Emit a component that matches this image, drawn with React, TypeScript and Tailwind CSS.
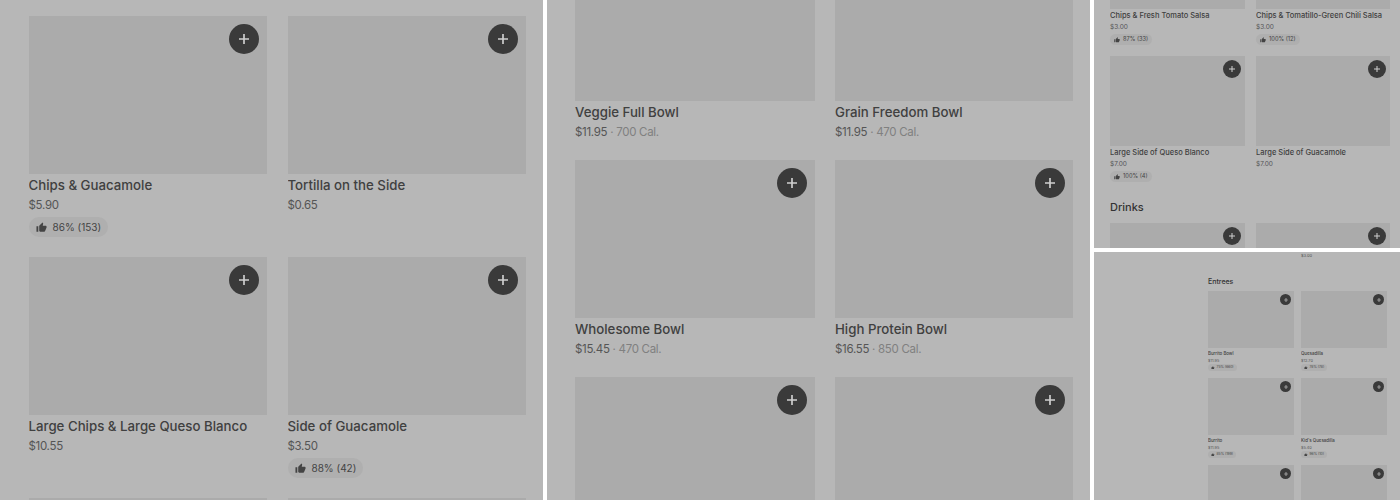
import { MdThumbUp } from 'react-icons/md';

type Item = { name: string; price?: string; cal?: string; rating?: string };

// class sets for each zoom level of the menu
const large = {
  image: 'h-[158px]',
  button: 'top-2 right-[8px] w-[30px] h-[30px]',
  plus: 'w-[10px] h-[10px]',
  name: 'mt-[2px] text-[13.25px] leading-[18px] font-medium',
  price: 'mt-[3px] text-[11.5px] leading-[16px] tracking-[-0.3px]',
  badge: 'mt-[4px] h-[20px] px-[7px] gap-[6px] text-[10px] rounded-[10px]',
  thumb: 'w-[11px] h-[11px]',
};
const medium = {
  image: 'h-[90px]',
  button: 'top-[4px] right-[4px] w-[18px] h-[18px]',
  plus: 'w-[6px] h-[6px]',
  name: 'mt-[2px] text-[7.5px] leading-[10px] font-medium',
  price: 'mt-[2px] text-[6.5px] leading-[9px]',
  badge: 'mt-[2px] h-[11px] px-[4px] gap-[3px] text-[5.7px] rounded-[6px]',
  thumb: 'w-[6px] h-[6px]',
};
const small = {
  image: 'h-[57px]',
  button: 'top-[3px] right-[3px] w-[11px] h-[11px]',
  plus: 'w-[4px] h-[4px]',
  name: 'mt-[2px] text-[4.4px] leading-[7px] font-medium',
  price: 'mt-[1px] text-[3.8px] leading-[6px]',
  badge: 'h-[7px] px-[3px] gap-[2px] text-[3.4px] rounded-[4px]',
  thumb: 'w-[3.5px] h-[3.5px]',
};

function Card({ item, size }: { item: Item; size: typeof large }) {
  return (
    <div>
      <div className={`relative bg-[#ababab] ${size.image}`}>
        <div className={`absolute flex items-center justify-center rounded-full bg-[#3a3a3a] ${size.button}`}>
          <svg viewBox="0 0 12 12" className={size.plus}>
            <path d="M5 0h2v5h5v2H7v5H5V7H0V5h5z" fill="#d0d0d0" />
          </svg>
        </div>
      </div>
      {item.name && <div className={`truncate text-[#404040] ${size.name}`}>{item.name}</div>}
      {item.price && (
        <div className={`text-[#555555] ${size.price}`}>
          {item.price}
          {item.cal && <span className="text-[#808080]"> · {item.cal}</span>}
        </div>
      )}
      {item.rating && (
        <div className={`flex w-fit items-center bg-[#afafaf] text-[#444444] ${size.badge}`}>
          <MdThumbUp className={size.thumb} />
          <span>{item.rating}</span>
        </div>
      )}
    </div>
  );
}

export default function App() {
  return (
    <div className="w-[1400px] h-[500px] overflow-hidden bg-white flex gap-[4px] font-['Inter','Liberation_Sans',sans-serif]">
      {/* first screen */}
      <div className="w-[543px] h-[500px] overflow-hidden bg-[#b7b7b7] pt-4 pl-[28.5px]">
        <div className="grid grid-cols-[238.5px_238.5px] gap-x-[20.5px] auto-rows-[241px]">
          <Card size={large} item={{ name: 'Chips & Guacamole', price: '$5.90', rating: '86% (153)' }} />
          <Card size={large} item={{ name: 'Tortilla on the Side', price: '$0.65' }} />
          <Card size={large} item={{ name: 'Large Chips & Large Queso Blanco', price: '$10.55' }} />
          <Card size={large} item={{ name: 'Side of Guacamole', price: '$3.50', rating: '88% (42)' }} />
          <Card size={large} item={{ name: '' }} />
          <Card size={large} item={{ name: '' }} />
        </div>
      </div>

      {/* second screen */}
      <div className="w-[543px] h-[500px] overflow-hidden bg-[#b7b7b7] pl-[28px]">
        <div className="-mt-[57px] grid grid-cols-[240px_238px] gap-x-[20px] auto-rows-[217px]">
          <Card size={large} item={{ name: 'Veggie Full Bowl', price: '$11.95', cal: '700 Cal.' }} />
          <Card size={large} item={{ name: 'Grain Freedom Bowl', price: '$11.95', cal: '470 Cal.' }} />
          <Card size={large} item={{ name: 'Wholesome Bowl', price: '$15.45', cal: '470 Cal.' }} />
          <Card size={large} item={{ name: 'High Protein Bowl', price: '$16.55', cal: '850 Cal.' }} />
          <Card size={large} item={{ name: '' }} />
          <Card size={large} item={{ name: '' }} />
        </div>
      </div>

      {/* right column */}
      <div className="w-[306px] flex flex-col gap-[4px]">
        <div className="h-[248px] overflow-hidden bg-[#b7b7b7] pl-4">
          <div className="-mt-[81px] grid grid-cols-[135px_134px] gap-x-[11px] auto-rows-[137px]">
            <Card size={medium} item={{ name: 'Chips & Fresh Tomato Salsa', price: '$3.00', rating: '87% (33)' }} />
            <Card size={medium} item={{ name: 'Chips & Tomatillo-Green Chili Salsa', price: '$3.00', rating: '100% (12)' }} />
            <Card size={medium} item={{ name: 'Large Side of Queso Blanco', price: '$7.00', rating: '100% (4)' }} />
            <Card size={medium} item={{ name: 'Large Side of Guacamole', price: '$7.00' }} />
          </div>
          <h2 className="h-[30px] pt-[6px] text-[11px] leading-[16px] font-medium text-[#333333]">Drinks</h2>
          <div className="grid grid-cols-[135px_134px] gap-x-[11px]">
            <Card size={medium} item={{ name: '' }} />
            <Card size={medium} item={{ name: '' }} />
          </div>
        </div>

        <div className="h-[248px] overflow-hidden bg-[#b7b7b7] pl-[114px]">
          <div className="pl-[93px] pt-[1px] h-[25px] text-[4px] leading-[6px] text-[#525252]">$3.00</div>
          <h2 className="h-[14px] text-[7px] leading-[10px] font-medium text-[#333333]">Entrees</h2>
          <div className="grid grid-cols-[86px_86px] gap-x-[7px] auto-rows-[87px]">
            <Card size={small} item={{ name: 'Burrito Bowl', price: '$11.95', rating: '75% (660)' }} />
            <Card size={small} item={{ name: 'Quesadilla', price: '$12.70', rating: '78% (78)' }} />
            <Card size={small} item={{ name: 'Burrito', price: '$11.95', rating: '85% (199)' }} />
            <Card size={small} item={{ name: "Kid's Quesadilla", price: '$5.40', rating: '96% (10)' }} />
            <Card size={small} item={{ name: '' }} />
            <Card size={small} item={{ name: '' }} />
          </div>
        </div>
      </div>
    </div>
  );
}
